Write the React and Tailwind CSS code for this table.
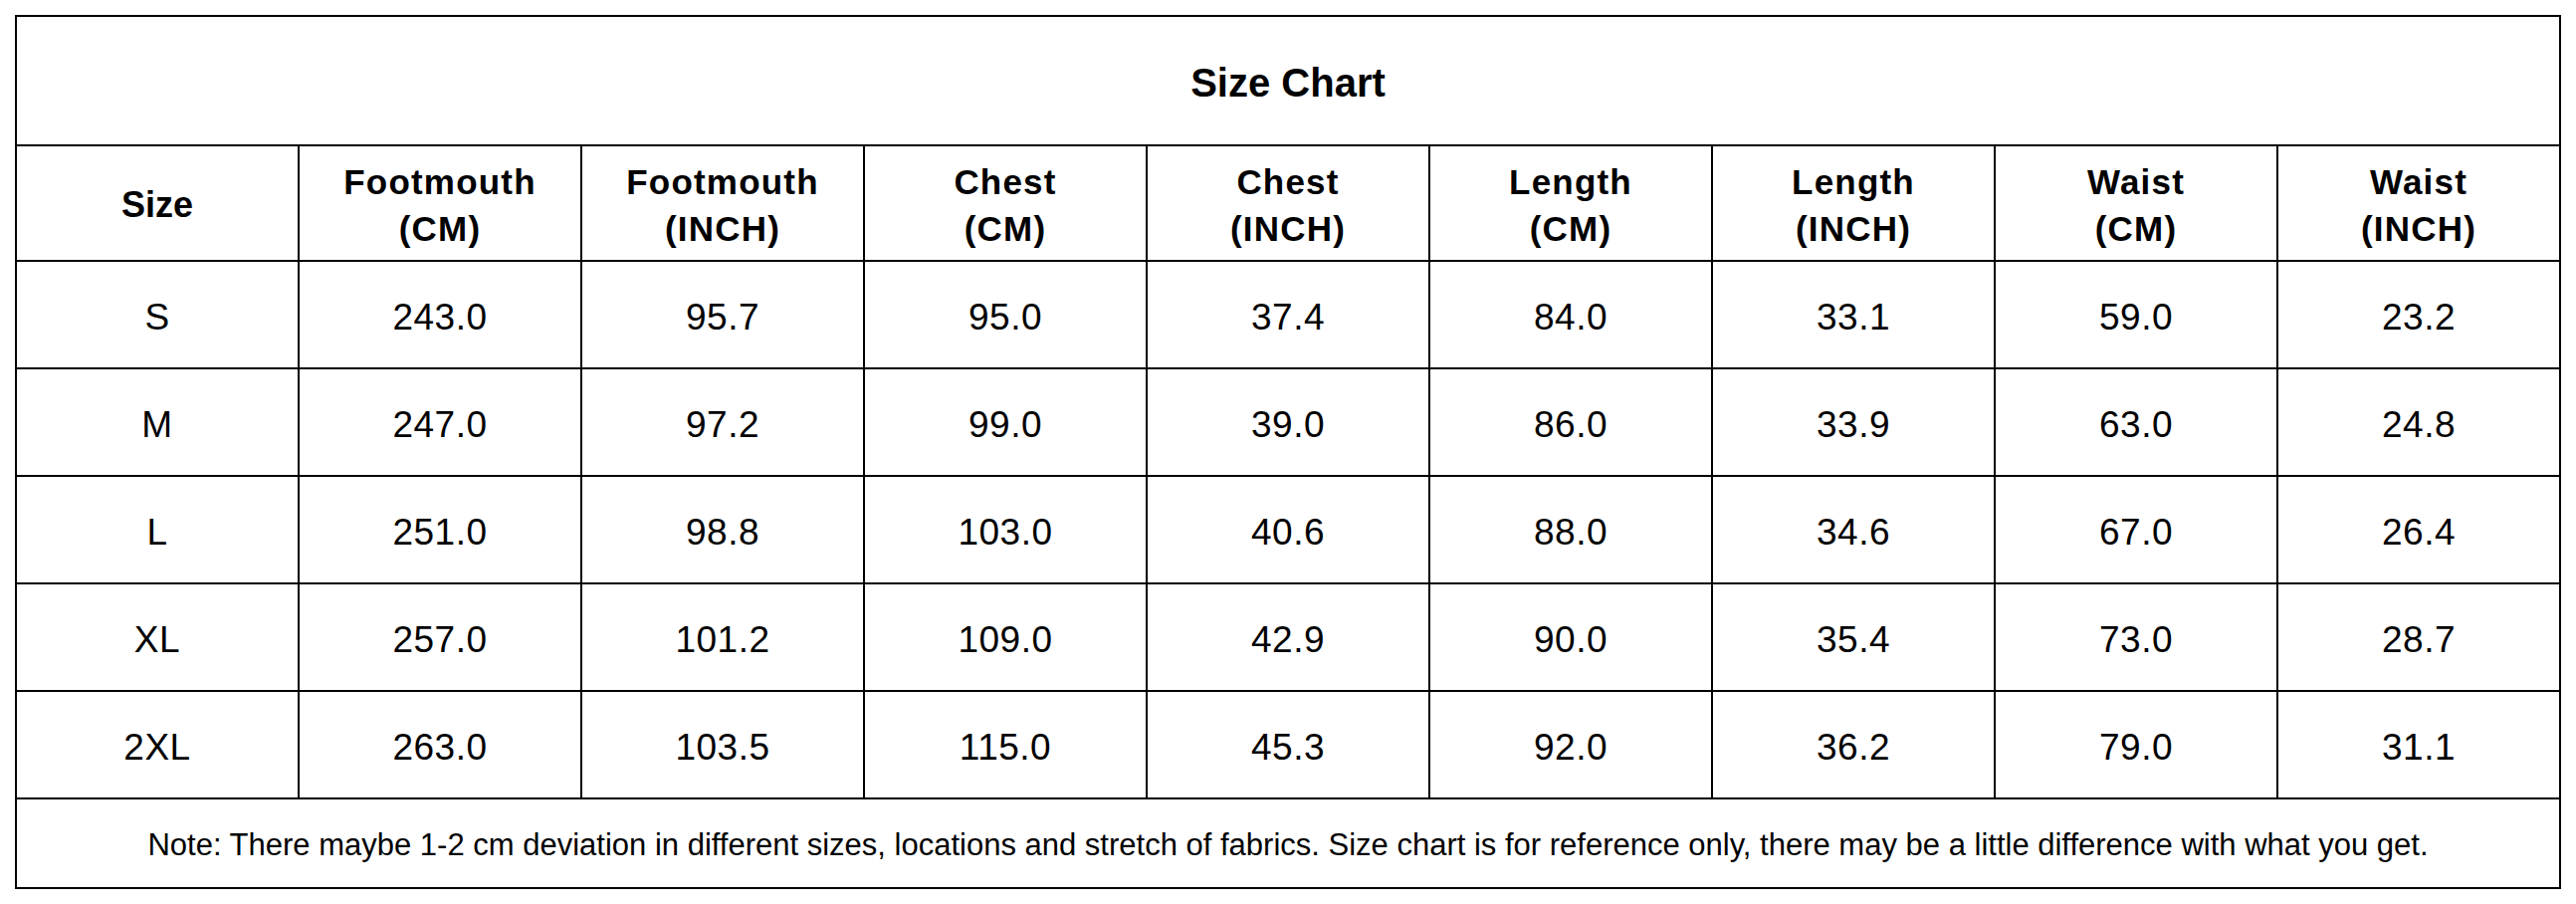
import React from "react";

const columns = [
  ["Footmouth", "(CM)"],
  ["Footmouth", "(INCH)"],
  ["Chest", "(CM)"],
  ["Chest", "(INCH)"],
  ["Length", "(CM)"],
  ["Length", "(INCH)"],
  ["Waist", "(CM)"],
  ["Waist", "(INCH)"],
];

const rows = [
  ["S", "243.0", "95.7", "95.0", "37.4", "84.0", "33.1", "59.0", "23.2"],
  ["M", "247.0", "97.2", "99.0", "39.0", "86.0", "33.9", "63.0", "24.8"],
  ["L", "251.0", "98.8", "103.0", "40.6", "88.0", "34.6", "67.0", "26.4"],
  ["XL", "257.0", "101.2", "109.0", "42.9", "90.0", "35.4", "73.0", "28.7"],
  ["2XL", "263.0", "103.5", "115.0", "45.3", "92.0", "36.2", "79.0", "31.1"],
];

export default function App() {
  return (
    <div className="w-[2588px] h-[908px] bg-white pt-[15px] pl-[15px] font-['Liberation_Sans',Arial,sans-serif] text-black">
      <table className="w-[2558px] table-fixed border-collapse border-2 border-black">
        <tbody>
          {/* Title */}
          <tr className="h-[130px]">
            <td colSpan={9} className="border-2 border-black pt-1 text-center text-[40px] font-bold">
              Size Chart
            </td>
          </tr>

          {/* Header */}
          <tr className="h-[116px]">
            <td className="border-2 border-black pt-1 text-center text-[36px] font-bold">Size</td>
            {columns.map(([name, unit], i) => (
              <td
                key={i}
                className="border-2 border-black pt-1 text-center text-[35px] font-bold leading-[47px] tracking-[1.2px]"
              >
                <div>{name}</div>
                <div>{unit}</div>
              </td>
            ))}
          </tr>

          {/* Data rows */}
          {rows.map((row) => (
            <tr key={row[0]} className="h-[108px]">
              {row.map((cell, i) => (
                <td
                  key={i}
                  className="border-2 border-black pt-[6px] text-center text-[37px] tracking-[0.5px]"
                >
                  {cell}
                </td>
              ))}
            </tr>
          ))}

          {/* Note */}
          <tr className="h-[90px]">
            <td colSpan={9} className="border-2 border-black pt-1 text-center text-[31px]">
              Note: There maybe 1-2 cm deviation in different sizes, locations and stretch of fabrics. Size chart is for reference only, there may be a little difference with what you get.
            </td>
          </tr>
        </tbody>
      </table>
    </div>
  );
}
